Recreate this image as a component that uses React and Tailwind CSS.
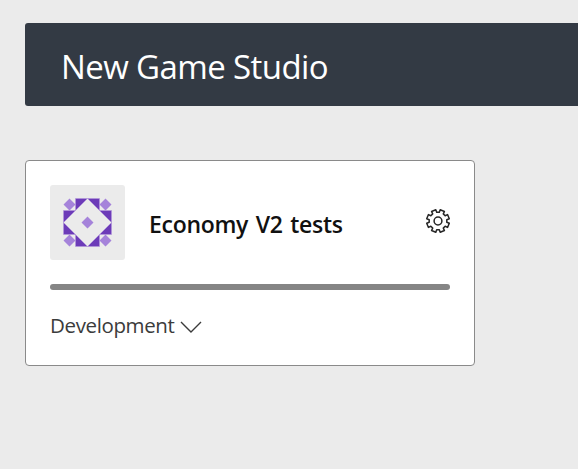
import React from 'react';

// Trace a gear outline with eight flat teeth around the centre.
function gearPath(c, outer, inner) {
  const pts = [];
  for (let i = 0; i < 8; i++) {
    const base = i * 45 + 22.5;
    [[-14, inner], [-11.5, outer], [11.5, outer], [14, inner]].forEach(([a, r]) => {
      const t = ((base + a) * Math.PI) / 180;
      pts.push(`${(c + r * Math.cos(t)).toFixed(2)} ${(c + r * Math.sin(t)).toFixed(2)}`);
    });
  }
  return `M${pts.join('L')}Z`;
}

function Gear() {
  return (
    <svg className="-mr-px mt-[23px] h-[26px] w-[26px] shrink-0" viewBox="0 0 26 26" fill="none" stroke="#262626" strokeWidth="1.5" strokeLinejoin="round">
      <path d={gearPath(13, 11.5, 8.9)} />
      <circle cx="13" cy="13" r="3.9" />
    </svg>
  );
}

function Avatar() {
  return (
    <svg className="h-[75px] w-[75px] shrink-0 rounded-[3px] bg-[#ebebeb]" viewBox="0 0 75 75">
      <g transform="translate(13.5 13.5)">
        <path fill="#6c3bb8" stroke="#b497dc" strokeWidth="0.6" d="M12 0H24L12 12ZM24 0H36V12ZM0 12H12L0 24ZM36 12H48V24ZM0 24L12 36H0ZM48 24V36H36ZM12 36L24 48H12ZM36 36V48H24Z" />
        <path fill="#a583da" d="M6 0L12 6L6 12L0 6ZM42 0L48 6L42 12L36 6ZM6 36L12 42L6 48L0 42ZM42 36L48 42L42 48L36 42ZM24 18L30 24L24 30L18 24Z" />
      </g>
    </svg>
  );
}

export default function App() {
  return (
    <main className="h-[469px] w-full overflow-hidden bg-[#ebebeb] pl-[25px] pt-[23px] font-['Open_Sans','Noto_Sans',sans-serif]">
      <header className="flex h-[83px] items-center rounded-l-[3px] bg-[#333a44] pl-9">
        <h1 className="whitespace-nowrap pt-[5px] text-[33px] leading-[44px] tracking-[-0.6px] text-white">New Game Studio</h1>
      </header>
      <section className="mt-[54px] h-[206px] w-[450px] rounded-[4px] border border-[#8a8a8a] bg-white px-6 pt-6">
        <div className="flex">
          <Avatar />
          <h2 className="ml-6 mt-[23px] flex-1 whitespace-nowrap text-[23px] font-semibold leading-[32px] tracking-[-0.3px] text-[#111] [word-spacing:2px]">Economy V2 tests</h2>
          <Gear />
        </div>
        <div className="mt-6 h-1.5 rounded-full bg-[#858585]" />
        <button className="mt-5 flex items-center text-[20.5px] leading-[30px] tracking-[-0.37px] text-[#3b3b3b]">
          Development
          <svg className="ml-[5px] mt-[4px] h-[12px] w-[22px]" viewBox="0 0 22 12" fill="none" stroke="#3b3b3b" strokeWidth="1.4">
            <path d="M1 1L11 11L21 1" />
          </svg>
        </button>
      </section>
    </main>
  );
}
